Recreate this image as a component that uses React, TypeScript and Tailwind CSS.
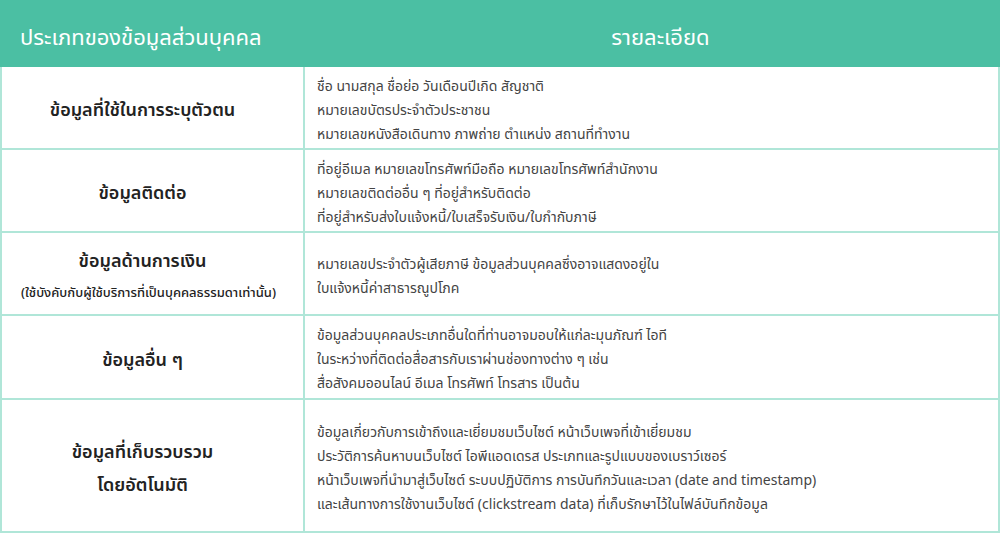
const rows = [
  {
    label: ["ข้อมูลที่ใช้ในการระบุตัวตน"],
    details: [
      "ชื่อ นามสกุล ชื่อย่อ วันเดือนปีเกิด สัญชาติ",
      "หมายเลขบัตรประจำตัวประชาชน",
      "หมายเลขหนังสือเดินทาง ภาพถ่าย ตำแหน่ง สถานที่ทำงาน",
    ],
    h: "h-[83px]",
  },
  {
    label: ["ข้อมูลติดต่อ"],
    details: [
      "ที่อยู่อีเมล หมายเลขโทรศัพท์มือถือ หมายเลขโทรศัพท์สำนักงาน",
      "หมายเลขติดต่ออื่น ๆ ที่อยู่สำหรับติดต่อ",
      "ที่อยู่สำหรับส่งใบแจ้งหนี้/ใบเสร็จรับเงิน/ใบกำกับภาษี",
    ],
    h: "h-[83px]",
  },
  {
    label: ["ข้อมูลด้านการเงิน"],
    sub: "(ใช้บังคับกับผู้ใช้บริการที่เป็นบุคคลธรรมดาเท่านั้น)",
    details: [
      "หมายเลขประจำตัวผู้เสียภาษี ข้อมูลส่วนบุคคลซึ่งอาจแสดงอยู่ใน",
      "ใบแจ้งหนี้ค่าสาธารณูปโภค",
    ],
    h: "h-[83px]",
  },
  {
    label: ["ข้อมูลอื่น ๆ"],
    details: [
      "ข้อมูลส่วนบุคคลประเภทอื่นใดที่ท่านอาจมอบให้แก่ละมุนภัณฑ์ ไอที",
      "ในระหว่างที่ติดต่อสื่อสารกับเราผ่านช่องทางต่าง ๆ เช่น",
      "สื่อสังคมออนไลน์ อีเมล โทรศัพท์ โทรสาร เป็นต้น",
    ],
    h: "h-[84px]",
  },
  {
    label: ["ข้อมูลที่เก็บรวบรวม", "โดยอัตโนมัติ"],
    details: [
      "ข้อมูลเกี่ยวกับการเข้าถึงและเยี่ยมชมเว็บไซต์ หน้าเว็บเพจที่เข้าเยี่ยมชม",
      "ประวัติการค้นหาบนเว็บไซต์ ไอพีแอดเดรส ประเภทและรูปแบบของเบราว์เซอร์",
      "หน้าเว็บเพจที่นำมาสู่เว็บไซต์ ระบบปฏิบัติการ การบันทึกวันและเวลา (date and timestamp)",
      "และเส้นทางการใช้งานเว็บไซต์ (clickstream data) ที่เก็บรักษาไว้ในไฟล์บันทึกข้อมูล",
    ],
    h: "h-[133px]",
  },
];

export default function App() {
  return (
    <div className="w-[1000px] h-[533px] bg-white font-['Noto_Sans_Thai','Leelawadee_UI','Noto_Sans',sans-serif] overflow-hidden">
      <div className="grid grid-cols-[305px_1fr] h-[67px] bg-[#4bbfa3] text-white text-[22px]">
        <div className="flex items-center pl-5 pt-[10px]">ประเภทของข้อมูลส่วนบุคคล</div>
        <div className="flex items-center justify-center pl-4 pt-[10px]">รายละเอียด</div>
      </div>
      <div className="border-x-2 border-[#b0e6d8]">
        {rows.map((r, i) => (
          <div key={i} className={`grid grid-cols-[303px_1fr] ${r.h} border-b-2 border-[#b0e6d8]`}>
            <div className="flex flex-col items-center justify-center border-r-2 border-[#b0e6d8] pr-5 pt-[6px] text-center">
              {r.label.map((l) => (
                <div key={l} className="text-[18px] font-semibold text-[#222] leading-[33px]">
                  {l}
                </div>
              ))}
              {r.sub && (
                <div className="whitespace-nowrap pl-3 text-[13px] font-medium leading-[30px] text-[#222]">
                  {r.sub}
                </div>
              )}
            </div>
            <div className="flex flex-col justify-center pl-3 pt-[6px] text-[14px] leading-[24px] text-[#444]">
              {r.details.map((d) => (
                <div key={d}>{d}</div>
              ))}
            </div>
          </div>
        ))}
      </div>
    </div>
  );
}
